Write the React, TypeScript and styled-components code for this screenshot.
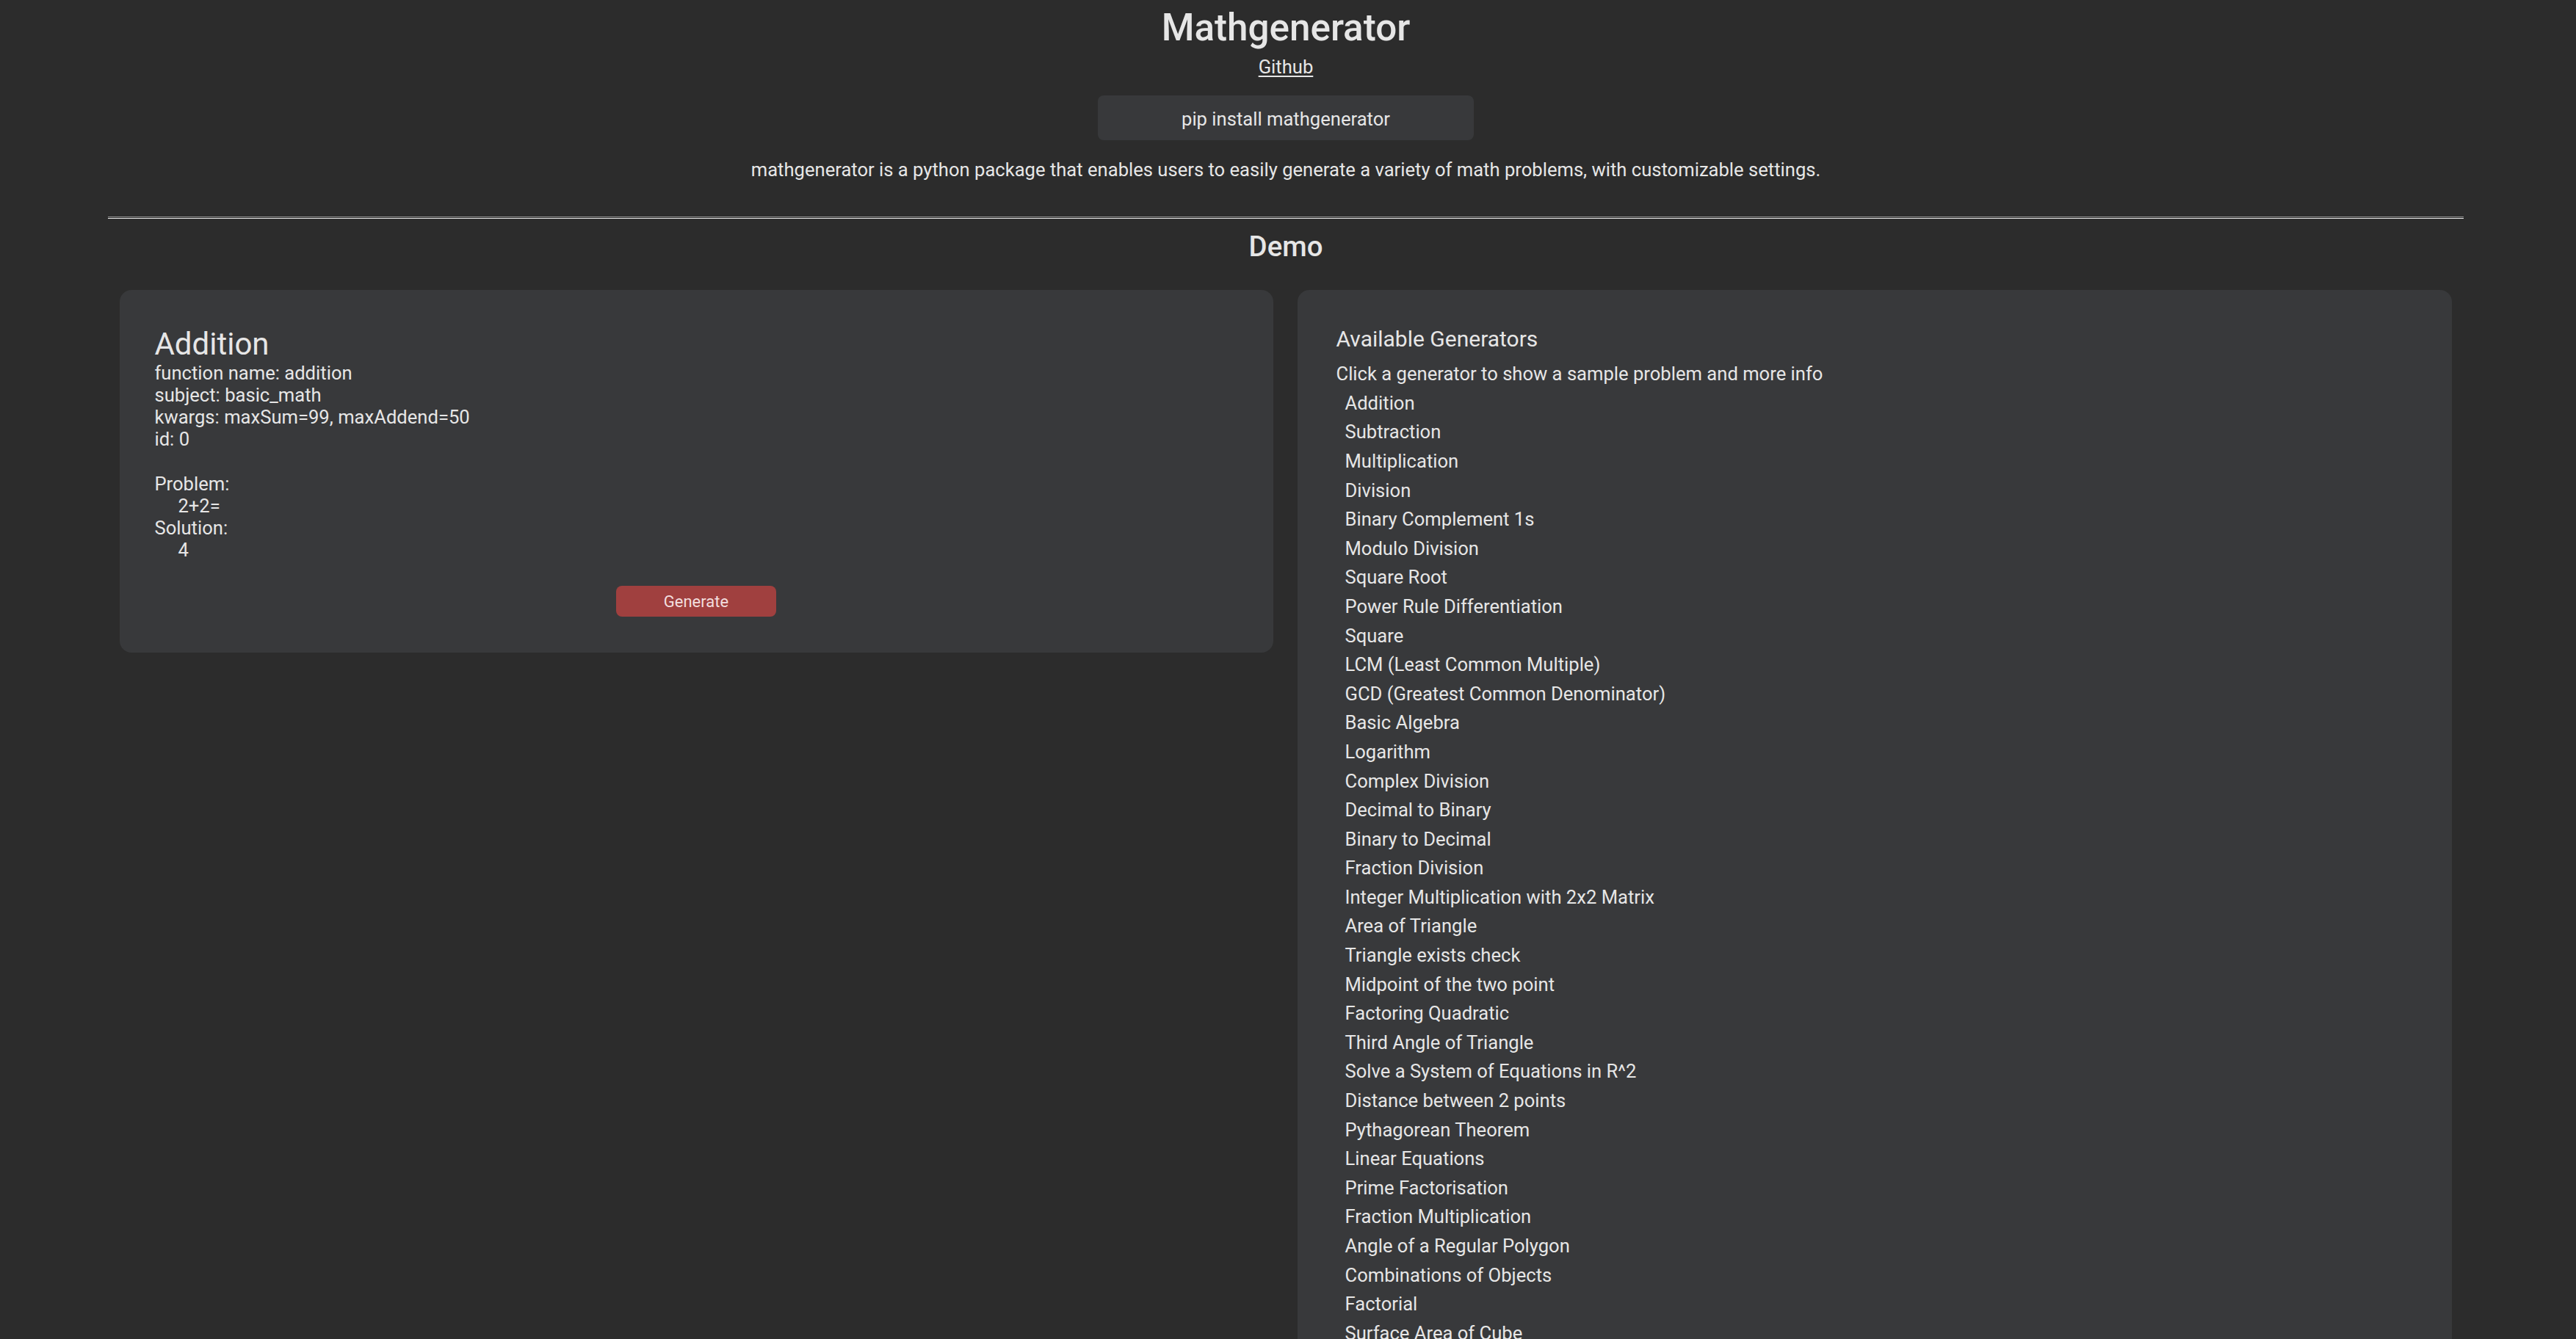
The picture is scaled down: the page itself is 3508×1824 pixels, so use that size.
import React from "react"
import styled, { createGlobalStyle } from "styled-components"

const colors = {
  page: "#2c2c2c",
  card: "#38393b",
  text: "#e6e6e6",
  button: "#a0403f",
  buttonText: "#f2dede",
}

const GlobalStyle = createGlobalStyle`
  body {
    background: ${colors.page};
    color: ${colors.text};
    font-family: Roboto, "Noto Sans", sans-serif;
    font-size: 25.6px;
    margin: 7px 8px 8px;
    padding-right: 6px;
  }
`

const Header = styled.header`
  display: flex;
  flex-direction: column;
  align-items: center;
`

const Title = styled.h1`
  font-size: 51.2px;
  font-weight: 500;
  margin: 0;
`

const GithubLink = styled.a`
  color: ${colors.text};
  margin-top: 8px;
  text-decoration: underline;
  text-underline-offset: 3px;
`

const Install = styled.div`
  background: ${colors.card};
  border-radius: 8px;
  box-sizing: border-box;
  margin-top: 24px;
  padding: 17px 0 14px;
  text-align: center;
  width: 512px;
`

const Description = styled.p`
  margin: 25px 0 0;
`

const Rule = styled.hr`
  border: 0;
  border-top: 1px solid #9a9a9a;
  border-bottom: 1px solid #e8e8e8;
  height: 1px;
  margin: 49px auto 0;
  width: 92%;
`

const SectionTitle = styled.h2`
  font-size: 38.4px;
  font-weight: 500;
  margin: 15px 0 0;
  text-align: center;
`

const Columns = styled.main`
  align-items: start;
  box-sizing: border-box;
  display: grid;
  gap: 33px;
  grid-template-columns: 1fr 1fr;
  margin: 37px auto 0;
  padding: 0 16px;
  width: 92%;
`

const Card = styled.section<{ inset?: number }>`
  background: ${colors.card};
  border-radius: 16px;
  display: flex;
  flex-direction: column;
  padding: 49px;
  padding-left: ${(props): number => props.inset ?? 49}px;
`

const ProblemName = styled.h2`
  font-size: 42px;
  font-weight: 400;
  margin: 0;
`

const Line = styled.div<{ indent?: boolean }>`
  padding-left: ${(props): string => (props.indent ? "32px" : "0")};
`

const Gap = styled.div`
  height: 31px;
`

const GenerateButton = styled.button`
  align-self: center;
  background: ${colors.button};
  border: 0;
  border-radius: 8px;
  color: ${colors.buttonText};
  font-family: Roboto, sans-serif;
  font-size: 22px;
  height: 42px;
  margin-top: 34px;
  width: 218px;
`

const ListTitle = styled.h3`
  font-size: 30px;
  font-weight: 400;
  margin: 0 0 15px;
`

const GeneratorList = styled.ul`
  list-style: none;
  margin: 5px 0 0;
  padding: 0;
`

const GeneratorItem = styled.li`
  cursor: pointer;
  padding: 4.8px 12px;
`

const generators = [
  "Addition",
  "Subtraction",
  "Multiplication",
  "Division",
  "Binary Complement 1s",
  "Modulo Division",
  "Square Root",
  "Power Rule Differentiation",
  "Square",
  "LCM (Least Common Multiple)",
  "GCD (Greatest Common Denominator)",
  "Basic Algebra",
  "Logarithm",
  "Complex Division",
  "Decimal to Binary",
  "Binary to Decimal",
  "Fraction Division",
  "Integer Multiplication with 2x2 Matrix",
  "Area of Triangle",
  "Triangle exists check",
  "Midpoint of the two point",
  "Factoring Quadratic",
  "Third Angle of Triangle",
  "Solve a System of Equations in R^2",
  "Distance between 2 points",
  "Pythagorean Theorem",
  "Linear Equations",
  "Prime Factorisation",
  "Fraction Multiplication",
  "Angle of a Regular Polygon",
  "Combinations of Objects",
  "Factorial",
  "Surface Area of Cube",
  "Surface Area of Cuboid",
  "Surface Area of Cylinder",
  "Volume of Cube",
]

const App: React.FC = () => {
  return (
    <>
      <GlobalStyle />
      <Header>
        <Title>Mathgenerator</Title>
        <GithubLink href="#">Github</GithubLink>
        <Install>pip install mathgenerator</Install>
        <Description>
          mathgenerator is a python package that enables users to easily generate a variety of
          math problems, with customizable settings.
        </Description>
      </Header>
      <Rule />
      <SectionTitle>Demo</SectionTitle>
      <Columns>
        <Card inset={47}>
          <ProblemName>Addition</ProblemName>
          <Line>function name: addition</Line>
          <Line>subject: basic_math</Line>
          <Line>kwargs: maxSum=99, maxAddend=50</Line>
          <Line>id: 0</Line>
          <Gap />
          <Line>Problem:</Line>
          <Line indent>2+2=</Line>
          <Line>Solution:</Line>
          <Line indent>4</Line>
          <GenerateButton>Generate</GenerateButton>
        </Card>
        <Card inset={52}>
          <ListTitle>Available Generators</ListTitle>
          <Line>Click a generator to show a sample problem and more info</Line>
          <GeneratorList>
            {generators.map(name => (
              <GeneratorItem key={name}>{name}</GeneratorItem>
            ))}
          </GeneratorList>
        </Card>
      </Columns>
    </>
  )
}

export default App
